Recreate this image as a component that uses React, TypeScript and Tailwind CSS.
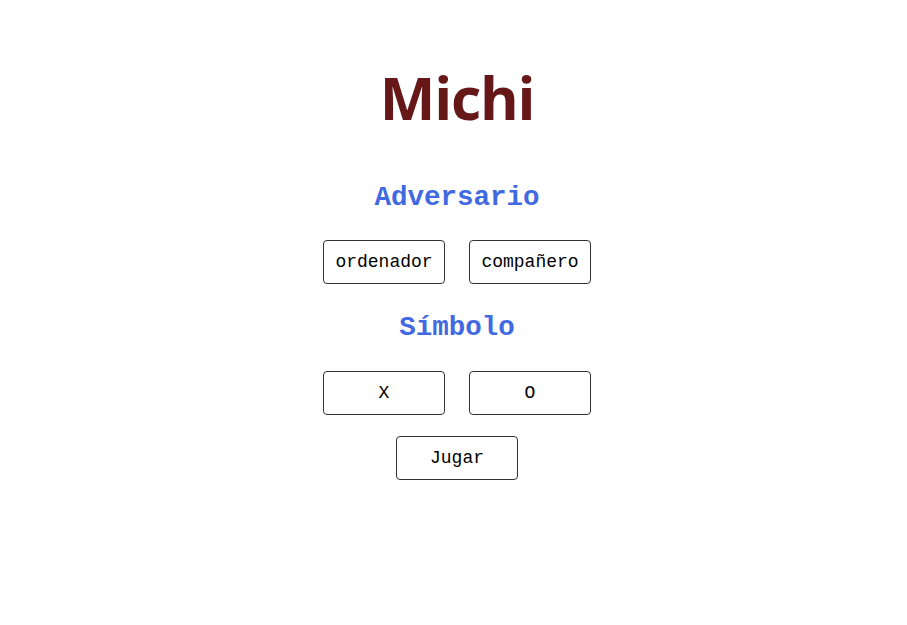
export default function App() {
  const btn =
    "w-[122px] h-[44px] border border-[#333] rounded-[4px] bg-white text-black text-[18px] font-['Liberation_Mono','DejaVu_Sans_Mono',monospace] flex items-center justify-center";
  return (
    <div className="min-h-[625px] w-full bg-white flex flex-col items-center pl-[7px] font-['Liberation_Mono','DejaVu_Sans_Mono',monospace]">
      <h1 className="mt-[59px] text-[59px] leading-[76px] font-bold tracking-[-1.3px] text-[#661818] font-['Open_Sans','Noto_Sans',sans-serif]">
        Michi
      </h1>
      <h2 className="mt-[45px] text-[27.5px] leading-[36px] font-bold text-[#4169e1]">Adversario</h2>
      <div className="mt-[24px] flex gap-[24px]">
        <button className={btn}>ordenador</button>
        <button className={btn}>compañero</button>
      </div>
      <h2 className="mt-[26px] text-[27.5px] leading-[36px] font-bold text-[#4169e1]">Símbolo</h2>
      <div className="mt-[25px] flex gap-[24px]">
        <button className={btn}>X</button>
        <button className={btn}>O</button>
      </div>
      <div className="mt-[21px]">
        <button className={btn}>Jugar</button>
      </div>
    </div>
  );
}
